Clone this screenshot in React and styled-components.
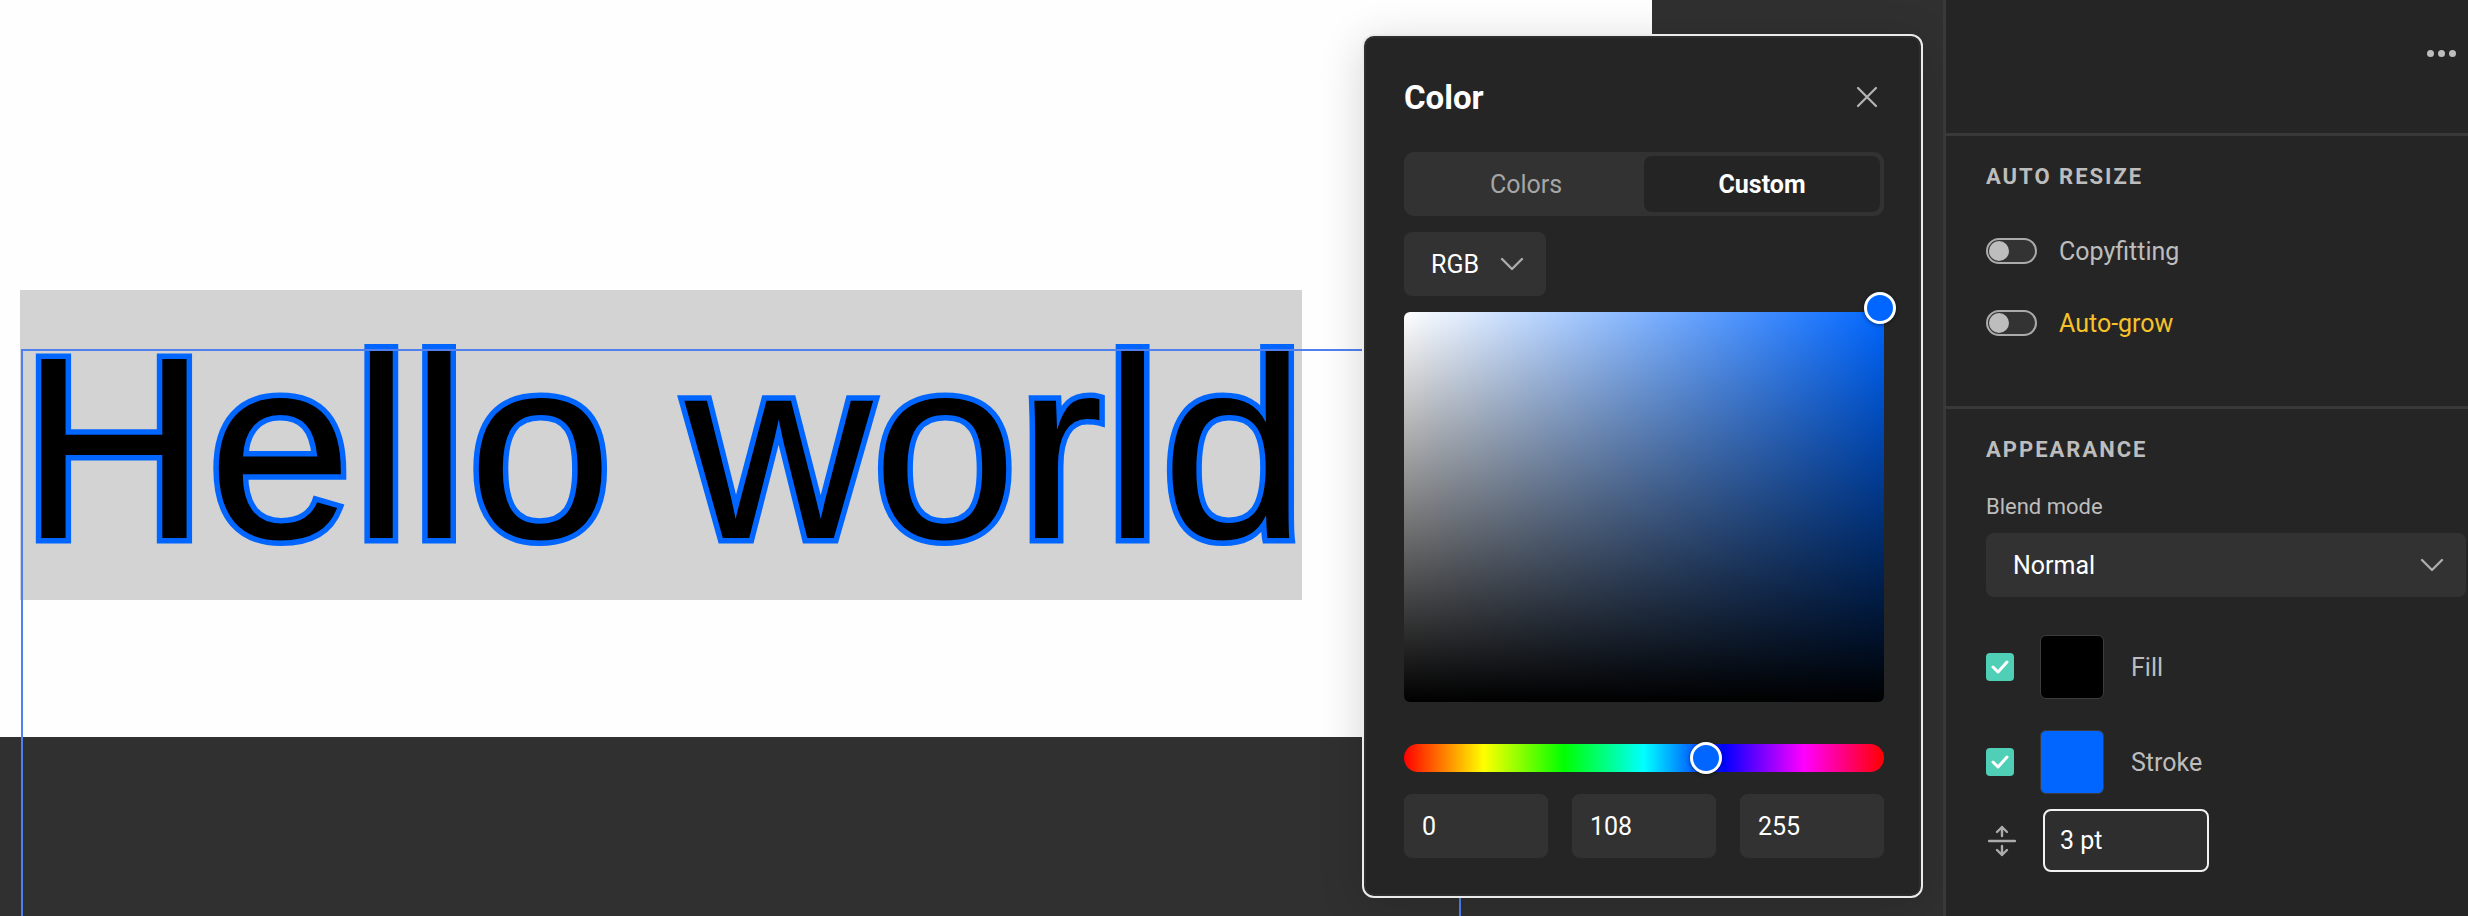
import React from 'react';
import styled, { createGlobalStyle } from 'styled-components';

const GlobalStyle = createGlobalStyle`
  html, body {
    margin: 0;
    padding: 0;
    background: #303030;
  }
  body {
    font-family: Roboto, 'Noto Sans', sans-serif;
    overflow: hidden;
  }
  * {
    box-sizing: border-box;
  }
`;

const Screen = styled.div`
  display: flex;
  width: 2468px;
  height: 916px;
  overflow: hidden;
`;

/* ---------- canvas ---------- */

const Workspace = styled.div`
  position: relative;
  flex: 0 0 1943px;
  background: #303030;
  overflow: hidden;
`;

const Page = styled.div`
  position: relative;
  width: 1652px;
  height: 737px;
  background: #fefefe;
`;

const TextFrame = styled.div`
  position: absolute;
  left: 20px;
  top: 290px;
  width: 1282px;
  height: 310px;
  padding-top: 28px;
  background: #d3d3d3;
`;

const CanvasText = styled.div`
  font-family: 'Liberation Sans', Arial, sans-serif;
  font-size: 260px;
  line-height: 1;
  color: #000;
  white-space: nowrap;
  -webkit-text-stroke: 11px #0066ff;
  paint-order: stroke fill;
`;

const Selection = styled.div`
  position: absolute;
  left: 21px;
  top: 349px;
  width: 1440px;
  height: 700px;
  border: 2px solid #5080f0;
  pointer-events: none;
`;

/* ---------- color popover ---------- */

const Popover = styled.div`
  position: absolute;
  left: 1362px;
  top: 34px;
  width: 561px;
  height: 864px;
  padding: 42px 37px 38px 40px;
  display: flex;
  flex-direction: column;
  background: #252525;
  border: 2px solid #ebebeb;
  border-radius: 12px;
  box-shadow: inset 0 0 0 2px #2e2e2e, 0 8px 44px rgba(0, 0, 0, 0.16);
`;

const PopoverHeader = styled.div`
  display: flex;
  align-items: center;
  justify-content: space-between;
  height: 38px;
`;

const Title = styled.h2`
  margin: 0;
  font-size: 33px;
  font-weight: 700;
  color: #fff;
`;

const CloseButton = styled.button`
  display: flex;
  padding: 0;
  margin-right: 6px;
  border: 0;
  background: none;
  color: #b4b4b4;
`;

const Segmented = styled.div`
  display: flex;
  height: 64px;
  margin-top: 36px;
  padding: 4px;
  background: #323232;
  border-radius: 10px;
`;

const Segment = styled.div`
  flex: 1;
  display: flex;
  align-items: center;
  justify-content: center;
  border-radius: 8px;
  font-size: 25px;
  font-weight: ${(p) => (p.$active ? 700 : 400)};
  color: ${(p) => (p.$active ? '#fff' : '#a6a6a6')};
  background: ${(p) => (p.$active ? '#242424' : 'transparent')};
`;

const FormatSelect = styled.div`
  display: flex;
  align-items: center;
  gap: 21px;
  width: 142px;
  height: 64px;
  margin-top: 16px;
  padding-left: 27px;
  background: #323232;
  border-radius: 8px;
  font-size: 25px;
  color: #fff;
`;

const Spectrum = styled.div`
  position: relative;
  height: 390px;
  margin-top: 16px;
  border-radius: 6px;
  background: linear-gradient(to top, #000, rgba(0, 0, 0, 0)),
    linear-gradient(to right, #fff, #0066ff);
`;

const Knob = styled.div`
  position: absolute;
  width: 32px;
  height: 32px;
  border-radius: 50%;
  background: #0066ff;
  border: 3px solid #fff;
  box-shadow: 0 1px 4px rgba(0, 0, 0, 0.45);
  transform: translate(-50%, -50%);
`;

const HueBar = styled.div`
  position: relative;
  height: 28px;
  margin-top: 42px;
  border-radius: 14px;
  background: linear-gradient(
    to right,
    #ff0000 0%,
    #ffff00 16.6%,
    #00ff00 33.3%,
    #00ffff 50%,
    #0000ff 66.6%,
    #ff00ff 83.3%,
    #ff0000 100%
  );
`;

const ChannelGrid = styled.div`
  display: grid;
  grid-template-columns: repeat(3, 1fr);
  gap: 24px;
  margin-top: 22px;
`;

const Channel = styled.div`
  display: flex;
  align-items: center;
  height: 64px;
  padding-left: 18px;
  background: #323232;
  border-radius: 8px;
  font-size: 25px;
  color: #fff;
`;

/* ---------- right panel ---------- */

const Panel = styled.aside`
  flex: 1;
  display: flex;
  flex-direction: column;
  background: #252525;
  border-left: 3px solid #393939;
`;

const PanelTop = styled.div`
  display: flex;
  justify-content: flex-end;
  align-items: flex-start;
  gap: 4px;
  height: 136px;
  padding: 50px 12px 0 0;
  border-bottom: 3px solid #393939;
`;

const Dot = styled.span`
  width: 7px;
  height: 7px;
  border-radius: 50%;
  background: #bdbdbd;
`;

const Section = styled.section`
  display: flex;
  flex-direction: column;
  align-items: flex-start;
  padding: 28px 0 ${(p) => p.$bottom || 0}px 40px;
  border-bottom: ${(p) => (p.$divided ? '3px solid #393939' : '0')};
`;

const SectionTitle = styled.h3`
  margin: 0;
  height: 26px;
  line-height: 26px;
  font-size: 22px;
  font-weight: 700;
  letter-spacing: 2px;
  color: #bdbdbd;
`;

const ToggleRow = styled.div`
  display: flex;
  align-items: center;
  gap: 22px;
  height: 40px;
  margin-top: ${(p) => p.$top}px;
`;

const Toggle = styled.div`
  display: flex;
  align-items: center;
  width: 51px;
  height: 26px;
  padding: 0 1px;
  background: #333;
  border: 2px solid #ababab;
  border-radius: 13px;
`;

const ToggleKnob = styled.span`
  width: 20px;
  height: 20px;
  border-radius: 50%;
  background: #bdbdbd;
`;

const ToggleLabel = styled.span`
  font-size: 25px;
  color: ${(p) => (p.$accent ? '#f6c22b' : '#bdbdbd')};
`;

const FieldLabel = styled.div`
  height: 26px;
  line-height: 26px;
  margin-top: 31px;
  font-size: 22px;
  color: #bdbdbd;
`;

const Select = styled.div`
  display: flex;
  align-items: center;
  justify-content: space-between;
  width: 480px;
  height: 64px;
  margin-top: 13px;
  padding: 0 22px 0 27px;
  background: #323232;
  border-radius: 8px;
  font-size: 25px;
  color: #fff;
`;

const PaintRow = styled.div`
  display: flex;
  align-items: center;
  height: 64px;
  margin-top: ${(p) => p.$top}px;
`;

const Checkbox = styled.span`
  display: flex;
  align-items: center;
  justify-content: center;
  width: 28px;
  height: 28px;
  border-radius: 4px;
  background: #4fd0b6;
`;

const Swatch = styled.span`
  width: 64px;
  height: 64px;
  margin-left: 26px;
  border-radius: 6px;
  border: 1px solid #3c3c3c;
  background: ${(p) => p.$color};
`;

const PaintLabel = styled.span`
  margin-left: 27px;
  font-size: 25px;
  color: #bdbdbd;
`;

const WidthRow = styled.div`
  display: flex;
  align-items: center;
  gap: 27px;
  margin-top: 15px;
  padding-left: 2px;
`;

const WidthInput = styled.div`
  display: flex;
  align-items: center;
  width: 166px;
  height: 63px;
  padding-left: 15px;
  background: #2e2e2e;
  border: 2px solid #f2f2f2;
  border-radius: 8px;
  font-size: 25px;
  color: #fff;
`;

/* ---------- icons ---------- */

const ChevronDown = () => (
  <svg width="24" height="14" viewBox="0 0 24 14" fill="none">
    <polyline points="2,2 12,12 22,2" stroke="#acacac" strokeWidth="2.4" strokeLinecap="round" strokeLinejoin="round" />
  </svg>
);

const CloseIcon = () => (
  <svg width="22" height="22" viewBox="0 0 22 22" fill="none">
    <path d="M2 2 L20 20 M20 2 L2 20" stroke="currentColor" strokeWidth="2.2" strokeLinecap="round" />
  </svg>
);

const CheckIcon = () => (
  <svg width="18" height="14" viewBox="0 0 18 14" fill="none">
    <polyline points="2,7 7,12 16,2" stroke="#fff" strokeWidth="3" strokeLinecap="round" strokeLinejoin="round" />
  </svg>
);

const StrokeWidthIcon = () => (
  <svg width="28" height="34" viewBox="0 0 28 34" fill="none" stroke="#acacac" strokeWidth="2.4" strokeLinecap="round" strokeLinejoin="round">
    <path d="M1 17 H27" />
    <path d="M14 12 V3 M9 8 L14 3 L19 8" />
    <path d="M14 22 V31 M9 26 L14 31 L19 26" />
  </svg>
);

const App = () => {
  const channels = ['0', '108', '255'];

  return (
    <>
      <GlobalStyle />
      <Screen>
        <Workspace>
          <Page>
            <TextFrame>
              <CanvasText>Hello world</CanvasText>
            </TextFrame>
          </Page>
          <Selection />

          <Popover>
            <PopoverHeader>
              <Title>Color</Title>
              <CloseButton aria-label="Close">
                <CloseIcon />
              </CloseButton>
            </PopoverHeader>

            <Segmented>
              <Segment>Colors</Segment>
              <Segment $active>Custom</Segment>
            </Segmented>

            <FormatSelect>
              RGB
              <ChevronDown />
            </FormatSelect>

            <Spectrum>
              <Knob style={{ left: '99.2%', top: '-4px' }} />
            </Spectrum>

            <HueBar>
              <Knob style={{ left: '62.9%', top: '50%' }} />
            </HueBar>

            <ChannelGrid>
              {channels.map((c) => (
                <Channel key={c}>{c}</Channel>
              ))}
            </ChannelGrid>
          </Popover>
        </Workspace>

        <Panel>
          <PanelTop>
            <Dot />
            <Dot />
            <Dot />
          </PanelTop>

          <Section $divided $bottom={63}>
            <SectionTitle>AUTO RESIZE</SectionTitle>
            <ToggleRow $top={41}>
              <Toggle>
                <ToggleKnob />
              </Toggle>
              <ToggleLabel>Copyfitting</ToggleLabel>
            </ToggleRow>
            <ToggleRow $top={32}>
              <Toggle>
                <ToggleKnob />
              </Toggle>
              <ToggleLabel $accent>Auto-grow</ToggleLabel>
            </ToggleRow>
          </Section>

          <Section>
            <SectionTitle>APPEARANCE</SectionTitle>
            <FieldLabel>Blend mode</FieldLabel>
            <Select>
              Normal
              <ChevronDown />
            </Select>

            <PaintRow $top={38}>
              <Checkbox>
                <CheckIcon />
              </Checkbox>
              <Swatch $color="#000" />
              <PaintLabel>Fill</PaintLabel>
            </PaintRow>

            <PaintRow $top={31}>
              <Checkbox>
                <CheckIcon />
              </Checkbox>
              <Swatch $color="#0066ff" />
              <PaintLabel>Stroke</PaintLabel>
            </PaintRow>

            <WidthRow>
              <StrokeWidthIcon />
              <WidthInput>3 pt</WidthInput>
            </WidthRow>
          </Section>
        </Panel>
      </Screen>
    </>
  );
};

export default App;
